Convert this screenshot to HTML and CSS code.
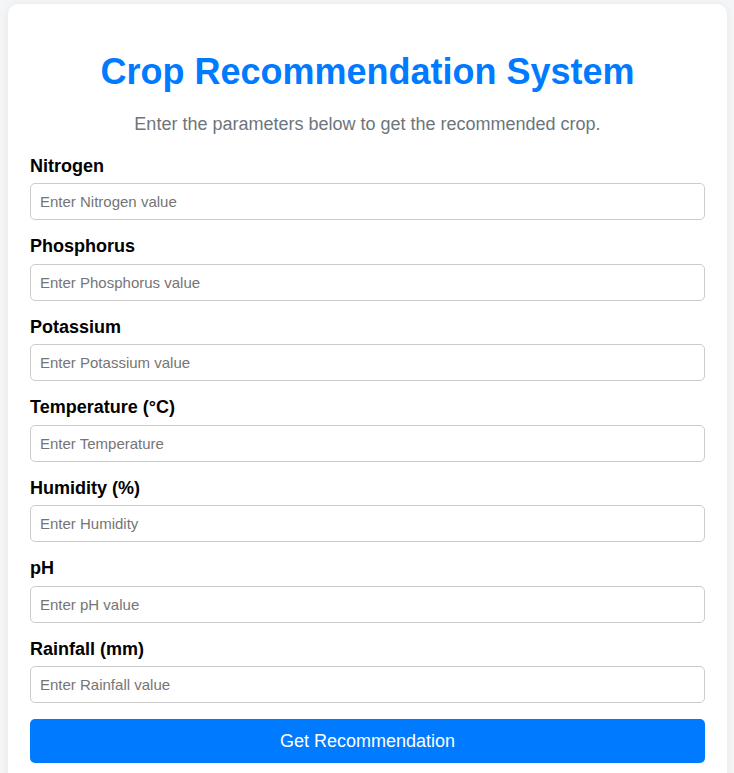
FILE: index.html
```html
<!DOCTYPE html>
<html>
<head>
<meta charset="utf-8">
<link rel="stylesheet" href="styles.css">
</head>
<body>
<div class="card">
  <h1 class="title">Crop Recommendation System</h1>
  <p class="subtitle">Enter the parameters below to get the recommended crop.</p>
  <form class="form">
    <div class="field"><label class="label">Nitrogen</label><input class="input" type="text" placeholder="Enter Nitrogen value"></div>
    <div class="field"><label class="label">Phosphorus</label><input class="input" type="text" placeholder="Enter Phosphorus value"></div>
    <div class="field"><label class="label">Potassium</label><input class="input" type="text" placeholder="Enter Potassium value"></div>
    <div class="field"><label class="label">Temperature (°C)</label><input class="input" type="text" placeholder="Enter Temperature"></div>
    <div class="field"><label class="label">Humidity (%)</label><input class="input" type="text" placeholder="Enter Humidity"></div>
    <div class="field"><label class="label">pH</label><input class="input" type="text" placeholder="Enter pH value"></div>
    <div class="field"><label class="label">Rainfall (mm)</label><input class="input" type="text" placeholder="Enter Rainfall value"></div>
    <button class="button" type="button">Get Recommendation</button>
  </form>
</div>
</body>
</html>
```
FILE: styles.css
```css
html, body {
  margin: 0;
  padding: 0;
  background: #f4f5f7;
  font-family: "Liberation Sans", Arial, sans-serif;
}
.card {
  width: 675px;
  margin: 4px 0 0 8px;
  padding: 20px 22px 30px;
  background: #fff;
  border-radius: 10px;
  box-shadow: 0 0 8px rgba(0,0,0,0.06);
}
.title {
  margin: 28px 0 0;
  text-align: center;
  color: #007bff;
  font-size: 36px;
  font-weight: bold;
  line-height: 40px;
}
.subtitle {
  margin: 21px 0 0;
  text-align: center;
  color: #6c757d;
  font-size: 18px;
  line-height: 22px;
}
.form {
  margin-top: 19.5px;
  display: flex;
  flex-direction: column;
}
.field {
  display: flex;
  flex-direction: column;
  margin-bottom: 15px;
}
.label {
  font-weight: bold;
  font-size: 18px;
  line-height: 22px;
  color: #000;
  margin-bottom: 6.5px;
}
.input {
  box-sizing: border-box;
  height: 37px;
  padding: 0 9px;
  border: 1px solid #ccc;
  border-radius: 5px;
  font-family: "Liberation Sans", Arial, sans-serif;
  font-size: 15px;
  color: #333;
  margin: 0;
}
.input::placeholder {
  color: #757575;
}
.button {
  height: 44px;
  margin-top: 1px;
  background: #007bff;
  color: #fff;
  border: none;
  border-radius: 5px;
  font-family: "Liberation Sans", Arial, sans-serif;
  font-size: 18px;
}
```
